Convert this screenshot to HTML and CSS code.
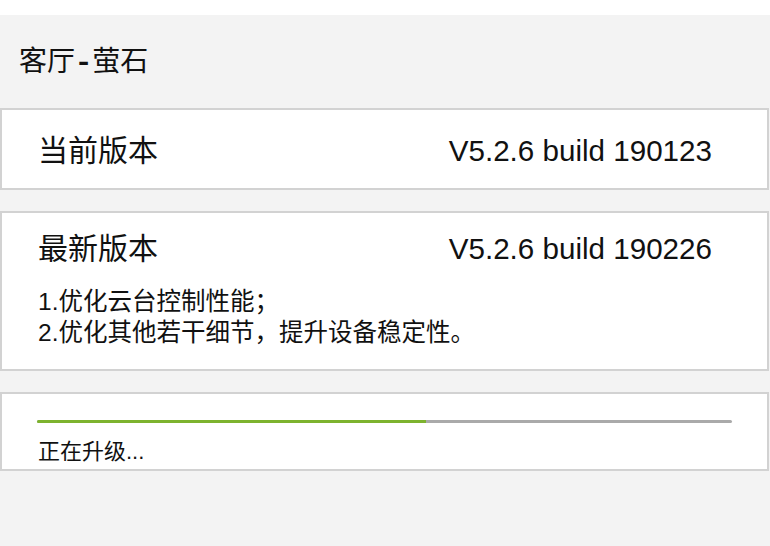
FILE: index.html
```html
<!DOCTYPE html>
<html lang="zh-CN">
<head>
<meta charset="utf-8">
<title>客厅-萤石</title>
<link rel="stylesheet" href="styles.css">
</head>
<body>
<div class="statusbar"></div>
<div class="title">客厅<span class="dash">-</span>萤石</div>
<section class="card row-card">
  <span class="label">当前版本</span>
  <span class="version">V5.2.6 build 190123</span>
</section>
<section class="card latest">
  <div class="row">
    <span class="label">最新版本</span>
    <span class="version">V5.2.6 build 190226</span>
  </div>
  <div class="notes">
    <div>1.优化云台控制性能；</div>
    <div>2.优化其他若干细节，提升设备稳定性。</div>
  </div>
</section>
<section class="card progress-card">
  <div class="track"><div class="fill" style="width:56%"></div></div>
  <div class="status">正在升级...</div>
</section>
</body>
</html>
```
FILE: styles.css
```css
html, body {
  margin: 0;
  padding: 0;
}
body {
  width: 770px;
  height: 546px;
  background: #f3f3f3;
  font-family: "Liberation Sans", "Noto Sans CJK SC", sans-serif;
  color: #111;
  overflow: hidden;
}
.statusbar {
  height: 15px;
  background: #fff;
}
.title {
  height: 93px;
  box-sizing: border-box;
  padding: 30px 0 0 19px;
  font-size: 28px;
  line-height: 34px;
}
.dash {
  display: inline-block;
  font-weight: bold;
  transform: scaleX(1.2);
  margin: 0 4px 0 4px;
}
.card {
  width: 769px;
  box-sizing: border-box;
  background: #fff;
  border: 2px solid #d2d2d2;
}
.row-card {
  height: 82px;
  display: flex;
  align-items: center;
  justify-content: space-between;
  padding: 3px 55px 0 36px;
}
.label, .version {
  font-size: 30px;
  line-height: 36px;
}
.version {
  font-size: 29.6px;
}
.latest {
  margin-top: 21px;
  height: 160px;
  padding: 18px 55px 0 36px;
}
.row {
  display: flex;
  justify-content: space-between;
  align-items: center;
}
.notes {
  margin-top: 19px;
  font-size: 24.5px;
  line-height: 31px;
}
.progress-card {
  margin-top: 21px;
  height: 79px;
  padding: 26px 35px 0 35px;
}
.track {
  height: 3px;
  border-radius: 2px;
  background: #aaaaaa;
  overflow: hidden;
}
.fill {
  height: 100%;
  background: #7db32e;
}
.status {
  margin-top: 16px;
  font-size: 22px;
  line-height: 26px;
  padding-left: 1px;
}
```
